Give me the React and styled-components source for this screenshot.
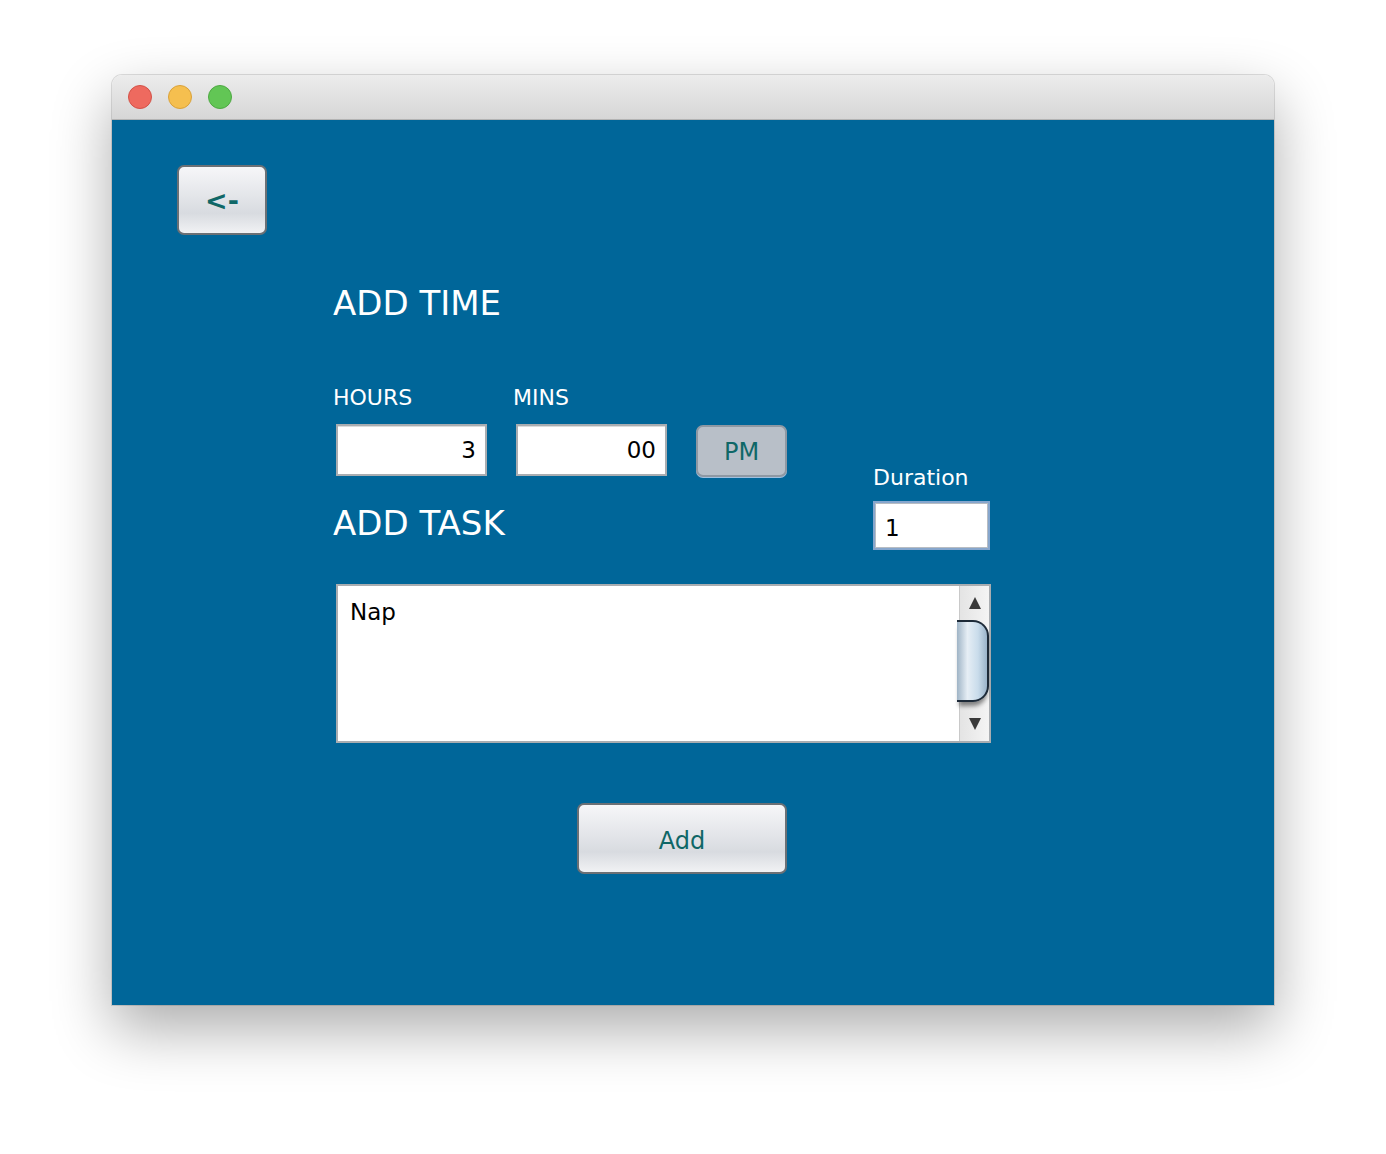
import React from "react";
import styled, { createGlobalStyle } from "styled-components";

const Global = createGlobalStyle`
  html, body { margin: 0; padding: 0; background: #ffffff; }
  body { font-family: "DejaVu Sans", "Liberation Sans", sans-serif; }
  * { box-sizing: border-box; }
`;

const Page = styled.div`
  width: 1386px;
  height: 1154px;
  padding: 75px 0 0 112px;
  background: #ffffff;
`;

const Window = styled.div`
  width: 1162px;
  height: 930px;
  border-radius: 10px 10px 0 0;
  overflow: hidden;
  display: flex;
  flex-direction: column;
  box-shadow: 0 24px 60px rgba(0, 0, 0, 0.33), 0 0 0 1px rgba(0, 0, 0, 0.12);
`;

const TitleBar = styled.div`
  height: 45px;
  flex: none;
  display: flex;
  align-items: center;
  gap: 16px;
  padding: 0 0 0 16px;
  background: linear-gradient(#ececec, #d6d6d6);
  border-bottom: 1px solid #b3b3b3;
`;

const Light = styled.span`
  width: 24px;
  height: 24px;
  border-radius: 50%;
  background: ${(p) => p.$fill};
  border: 1px solid ${(p) => p.$edge};
`;

const Content = styled.div`
  flex: 1;
  background: #006699;
  padding: 45px 0 0 65px;
`;

const RaisedButton = styled.button`
  width: ${(p) => p.$w}px;
  height: ${(p) => p.$h}px;
  border: 2px solid #6b7075;
  border-radius: 7px;
  background: linear-gradient(#f6f6f8 0%, #e3e5e9 45%, #d8dbe0 70%, #f1f2f4 100%);
  color: #0f6767;
  font-family: "DejaVu Sans", sans-serif;
  font-size: ${(p) => p.$fs}px;
  font-weight: ${(p) => (p.$bold ? 700 : 400)};
  display: flex;
  align-items: center;
  justify-content: center;
  padding: ${(p) => p.$pt || 0}px 0 0 0;
  cursor: pointer;
`;

const Form = styled.div`
  margin: 48px 0 0 156px;
  display: flex;
  flex-direction: column;
  align-items: flex-start;
`;

const Heading = styled.h1`
  margin: 0;
  font-family: "DejaVu Sans", sans-serif;
  font-weight: 400;
  font-size: 34px;
  line-height: 40px;
  color: #ffffff;
`;

const TopRow = styled.div`
  display: flex;
  align-items: flex-start;
  margin-top: 62px;
`;

const LeftCol = styled.div`
  width: 540px;
  display: flex;
  flex-direction: column;
`;

const LabelRow = styled.div`
  display: flex;
`;

const Label = styled.div`
  width: ${(p) => p.$w || "auto"};
  font-family: "DejaVu Sans", sans-serif;
  font-size: 22px;
  line-height: 26px;
  color: #ffffff;
`;

const FieldRow = styled.div`
  display: flex;
  gap: 29px;
  margin: 13px 0 26px 3px;
`;

const Field = styled.input`
  width: ${(p) => p.$w}px;
  height: ${(p) => p.$h}px;
  border: 2px solid ${(p) => (p.$focus ? "#86a6cd" : "#a9adb1")};
  box-shadow: ${(p) =>
    p.$focus ? "inset 0 0 0 1px #b7bcc2" : "inset 0 1px 0 #dcdcdc"};
  background: #ffffff;
  font-family: "DejaVu Sans", sans-serif;
  font-size: 23px;
  color: #000000;
  text-align: ${(p) => p.$align || "left"};
  padding: ${(p) => (p.$align === "right" ? "0 9px 0 0" : "4px 0 0 10px")};
  outline: none;
`;

const PmButton = styled.button`
  width: 91px;
  height: 52px;
  margin-top: 1px;
  border: 2px solid #8e98a3;
  border-radius: 7px;
  background: #b8bfc8;
  box-shadow: 0 1px 0 #9fc0e0;
  color: #0f6767;
  font-family: "DejaVu Sans", sans-serif;
  font-size: 24px;
  padding: 2px 0 0 0;
`;

const RightCol = styled.div`
  padding-top: 80px;
  display: flex;
  flex-direction: column;
  gap: 10px;
`;

const TaskBox = styled.div`
  margin: 34px 0 0 3px;
  width: 655px;
  height: 159px;
  border: 2px solid #a9adb1;
  background: #ffffff;
  display: flex;
`;

const TaskText = styled.div`
  flex: 1;
  padding: 12px 0 0 12px;
  font-family: "DejaVu Sans", sans-serif;
  font-size: 23px;
  line-height: 28px;
  color: #000000;
`;

const ScrollBar = styled.div`
  width: 30px;
  flex: none;
  background: linear-gradient(90deg, #e4e4e4, #f4f4f4);
  border-left: 1px solid #c9c9c9;
  display: flex;
  flex-direction: column;
  align-items: center;
`;

const Arrow = styled.div`
  height: 34px;
  width: 100%;
  display: flex;
  align-items: center;
  justify-content: center;
`;

const Track = styled.div`
  flex: 1;
  width: 100%;
  position: relative;
`;

const Thumb = styled.div`
  position: absolute;
  left: -3px;
  right: 0;
  top: 0;
  height: 82px;
  border: 2px solid #1d2a38;
  border-left: none;
  border-radius: 0 16px 16px 0;
  background: linear-gradient(90deg, #9fb4c6 0%, #e6eef5 35%, #c9dceb 70%, #9ab3c9 100%);
  box-shadow: 0 6px 4px -2px rgba(0, 0, 0, 0.45);
`;

const AddRow = styled.div`
  margin: 60px 0 0 244px;
`;

export default function App() {
  return (
    <Page>
      <Global />
      <Window>
        <TitleBar>
          <Light $fill="#ee6a5f" $edge="#d25248" />
          <Light $fill="#f5bf4f" $edge="#d9a13a" />
          <Light $fill="#62c655" $edge="#4ea843" />
        </TitleBar>
        <Content>
          <RaisedButton $w={90} $h={70} $fs={27} $bold>
            &lt;-
          </RaisedButton>
          <Form>
            <Heading>ADD TIME</Heading>
            <TopRow>
              <LeftCol>
                <LabelRow>
                  <Label $w="180px">HOURS</Label>
                  <Label>MINS</Label>
                </LabelRow>
                <FieldRow>
                  <Field $w={151} $h={52} $align="right" defaultValue="3" readOnly />
                  <Field $w={151} $h={52} $align="right" defaultValue="00" readOnly />
                  <PmButton>PM</PmButton>
                </FieldRow>
                <Heading>ADD TASK</Heading>
              </LeftCol>
              <RightCol>
                <Label>Duration</Label>
                <Field $w={117} $h={49} $focus defaultValue="1" readOnly />
              </RightCol>
            </TopRow>
            <TaskBox>
              <TaskText>Nap</TaskText>
              <ScrollBar>
                <Arrow>
                  <svg width="14" height="14" viewBox="0 0 14 14">
                    <path d="M7 1 L13 13 L1 13 Z" fill="#3a3a3a" />
                  </svg>
                </Arrow>
                <Track>
                  <Thumb />
                </Track>
                <Arrow>
                  <svg width="14" height="14" viewBox="0 0 14 14">
                    <path d="M1 1 L13 1 L7 13 Z" fill="#3a3a3a" />
                  </svg>
                </Arrow>
              </ScrollBar>
            </TaskBox>
            <AddRow>
              <RaisedButton $w={210} $h={71} $fs={24} $pt={5}>
                Add
              </RaisedButton>
            </AddRow>
          </Form>
        </Content>
      </Window>
    </Page>
  );
}
